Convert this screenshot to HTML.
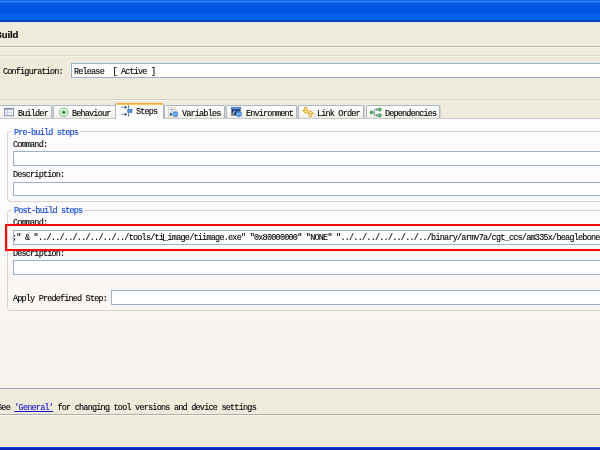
<!DOCTYPE html>
<html>
<head>
<meta charset="utf-8">
<title>Build</title>
<style>
html,body{margin:0;padding:0;}
html{width:600px;height:450px;overflow:hidden;background:#eeebdc;}
body{width:600px;height:450px;overflow:hidden;background:#eeebdc;position:relative;font-family:"Liberation Mono","DejaVu Sans Mono",monospace;}
.abs{position:absolute;}
.t{position:absolute;will-change:transform;font-size:8.5px;line-height:10px;letter-spacing:-0.83px;white-space:pre;color:#000;-webkit-text-stroke:0.12px currentColor;}
.titlebar{left:0;top:0;width:600px;height:22px;background:linear-gradient(to bottom,#0a56d8 0px,#2e88ff 1.5px,#0a5ce8 3px,#0055e2 6px,#0055e0 12px,#0760ee 15px,#0763f2 19px,#0048d0 20.5px,#003cc0 21.5px,#eeebdc 22px);}
.hdr{left:0;top:22px;width:600px;height:368px;background:#eeebdc;}
.build{will-change:transform;left:-5px;top:28.5px;font-family:"Liberation Sans",sans-serif;font-weight:bold;font-size:9.6px;line-height:12px;color:#000;letter-spacing:-0.15px;-webkit-text-stroke:0.15px #000;}
.hl{left:0;width:600px;height:1px;}
.inp{position:absolute;background:#fff;border:1px solid #98b2cf;box-sizing:border-box;}
.page{left:-2px;top:118px;width:604px;height:269.3px;border-top:1px solid #c9cacc;border-bottom:1px solid #a0abb5;background:linear-gradient(to bottom,#fefcfe 0%,#fcf9fb 40%,#f8f5f1 75%,#f6f3ed 100%);}
.tab{position:absolute;top:105px;height:13px;box-sizing:border-box;border:1px solid #a9b8c4;border-bottom:none;border-radius:2px 2px 0 0;background:linear-gradient(to bottom,#ffffff 0%,#fbfbf8 50%,#eeede4 100%);box-shadow:1px 0 0 #d4d2c4;}
.tab.sel{top:103px;height:16px;background:linear-gradient(to bottom,#eda230 0,#f3ac38 1px,#fdc654 1.2px,#fdca5c 2.4px,#fefcfd 2.5px);border-color:#aab7c1;border-top:none;border-radius:3px 3px 0 0;box-shadow:none;}
.grp{position:absolute;border:1px solid #d7d5c7;border-radius:3px;box-sizing:border-box;}
.gt{color:#0a46d8;}
</style>
</head>
<body>
<div style="position:absolute;left:0;top:0;width:600px;height:450px;overflow:hidden;">
<div class="abs hdr"></div>
<div class="abs titlebar"></div>
<div class="abs build">Build</div>
<div class="abs hl" style="top:46px;background:#bcbaae;"></div>
<div class="abs hl" style="top:47px;background:#f4f2ea;"></div>
<div class="abs hl" style="top:54.5px;background:#dcd9cc;"></div>
<div class="abs hl" style="top:55.5px;background:#f3f1e8;"></div>

<div class="t" style="left:3px;top:67px;">Configuration:</div>
<div class="inp" style="left:71px;top:63px;width:540px;height:15px;"></div>
<div class="t" style="left:74px;top:67px;">Release  [ Active ]</div>

<div class="abs hl" style="top:98.5px;background:#d6d3c6;"></div>
<div class="abs hl" style="top:99.5px;background:#f3f1e8;"></div>

<!-- tab page -->
<div class="abs page"></div>

<!-- tabs -->
<div class="tab" style="left:-2px;width:54px;"></div>
<div class="tab" style="left:53px;width:63px;"></div>
<div class="tab" style="left:164px;width:61px;"></div>
<div class="tab" style="left:226px;width:71px;"></div>
<div class="tab" style="left:298px;width:66px;"></div>
<div class="tab" style="left:366px;width:74px;"></div>
<div class="tab sel" style="left:115px;width:49px;"></div>

<div class="t" style="left:18px;top:109px;">Builder</div>
<div class="t" style="left:72px;top:109px;">Behaviour</div>
<div class="t" style="left:135.8px;top:107px;">Steps</div>
<div class="t" style="left:182px;top:109px;">Variables</div>
<div class="t" style="left:246px;top:109px;">Environment</div>
<div class="t" style="left:317px;top:109px;">Link Order</div>
<div class="t" style="left:385px;top:109px;">Dependencies</div>

<!-- icons -->
<svg class="abs" style="left:0;top:100px;" width="450" height="22" viewBox="0 100 450 22">
  <!-- builder -->
  <rect x="4.5" y="108.4" width="9" height="7.2" fill="#f1f3f9" stroke="#8a98bb" stroke-width="1"/>
  <rect x="4" y="107.9" width="10" height="1.9" fill="#8a98bb"/>
  <line x1="7.3" y1="110" x2="7.3" y2="115.3" stroke="#b3bdd6" stroke-width="0.9"/>
  <line x1="5" y1="112.6" x2="13.4" y2="112.6" stroke="#d0d6e6" stroke-width="0.8"/>
  <!-- behaviour -->
  <circle cx="63.7" cy="112.3" r="4.2" fill="#f3faf4" stroke="#66b886" stroke-width="1"/>
  <circle cx="63.7" cy="112.3" r="2.2" fill="#8fd0a0"/>
  <circle cx="63.7" cy="112.3" r="1.4" fill="#2f8f38"/>
  <!-- steps -->
  <line x1="121.3" y1="107.3" x2="125.2" y2="107.3" stroke="#3f86d6" stroke-width="0.9"/>
  <line x1="121.3" y1="114.3" x2="125.2" y2="114.3" stroke="#3f86d6" stroke-width="0.9"/>
  <path d="M124.8 105.6 L127.2 107.3 L124.8 109 Z" fill="#3e4a60"/>
  <path d="M124.8 112.6 L127.2 114.3 L124.8 116 Z" fill="#3e4a60"/>
  <line x1="128.5" y1="105.3" x2="128.5" y2="108.6" stroke="#3a557e" stroke-width="0.8"/>
  <line x1="128.5" y1="113" x2="128.5" y2="116.5" stroke="#3a557e" stroke-width="0.8"/>
  <rect x="127.3" y="109" width="5" height="3.8" fill="#2f76c6"/>
  <rect x="127.3" y="110.3" width="5" height="1.1" fill="#78aee6"/>
  <!-- variables -->
  <path d="M168.4 107.4 H174.3 L177 110.1 V117.2 H168.4 Z" fill="#f9f9fc" stroke="#d8c99c" stroke-width="0.8"/>
  <path d="M174.3 107.4 L177 110.1 H174.3 Z" fill="#e3cd8c"/>
  <rect x="170" y="109.2" width="3.4" height="1" fill="#6b88c8"/>
  <rect x="170" y="111.2" width="4.6" height="0.7" fill="#c5d1ea"/>
  <rect x="169.8" y="112.8" width="2" height="3" fill="#2f4f9a"/>
  <circle cx="175.3" cy="114.1" r="2.9" fill="#4b8cd8"/>
  <rect x="173.4" y="113.1" width="3.8" height="0.7" fill="#9cc3f0"/>
  <rect x="173.4" y="114.5" width="3.8" height="0.7" fill="#8ab8ec"/>
  <!-- environment -->
  <rect x="231.2" y="107.2" width="9.6" height="8.5" fill="#27427e" stroke="#b9a56e" stroke-width="0.6"/>
  <rect x="231" y="107" width="10" height="1.9" fill="#3a7cdb"/>
  <rect x="232" y="108" width="8" height="0.5" fill="#9cc0f2"/>
  <path d="M232.6 114.6 L234.9 110.4" stroke="#f0f4ff" stroke-width="1" fill="none"/>
  <circle cx="239" cy="114" r="3" fill="#4b8cd4"/>
  <rect x="237" y="113" width="4" height="0.7" fill="#a6caf2"/>
  <rect x="237" y="114.4" width="4" height="0.7" fill="#8fbcec"/>
  <!-- link order -->
  <g fill="#f9cf5e" stroke="#dc9c1c" stroke-width="0.8" stroke-linejoin="round">
    <path d="M304.6 107.3 H306.8 V110.4 H308.8 L305.7 113.6 L302.6 110.4 H304.6 Z"/>
    <path d="M310.5 110.6 L313.8 113.5 H311.7 V116.6 H309.3 V113.5 H307.4 Z"/>
  </g>
  <path d="M305.7 108 V112" stroke="#fff3c0" stroke-width="0.8"/>
  <path d="M310.5 112 V116" stroke="#fff3c0" stroke-width="0.8"/>
  <!-- dependencies -->
  <g stroke="#66789a" stroke-width="0.8" fill="none">
    <path d="M372.5 112.3 H374.3 M377.8 109.5 H374.3 V115.3 H377.8"/>
    <path d="M376.5 108 V110.8 M376.5 113.9 V116.7" stroke-width="0.7"/>
  </g>
  <circle cx="371.5" cy="112.3" r="1.9" fill="#43a04a"/>
  <circle cx="379.5" cy="109.5" r="2.1" fill="#43a04a"/>
  <circle cx="379.5" cy="115.3" r="2.1" fill="#43a04a"/>
  <circle cx="371.3" cy="112" r="0.8" fill="#7cc884"/>
  <circle cx="379.3" cy="109.2" r="0.9" fill="#7cc884"/>
  <circle cx="379.3" cy="115" r="0.9" fill="#7cc884"/>
</svg>

<!-- group 1 -->
<div class="grp" style="left:7px;top:131.3px;width:610px;height:70.3px;"></div>
<div class="abs" style="left:11.5px;top:130px;width:68px;height:3px;background:#fcfafc;"></div>
<div class="t gt" style="left:13.5px;top:128px;">Pre-build steps</div>
<div class="t" style="left:13px;top:140px;">Command:</div>
<div class="inp" style="left:13px;top:151.1px;width:600px;height:15px;"></div>
<div class="t" style="left:13px;top:170px;">Description:</div>
<div class="inp" style="left:13px;top:181.6px;width:600px;height:14.4px;"></div>

<!-- group 2 -->
<div class="grp" style="left:7px;top:210px;width:610px;height:100.6px;"></div>
<div class="abs" style="left:11.5px;top:209px;width:72px;height:3px;background:#fbf9fa;"></div>
<div class="t gt" style="left:13.5px;top:206px;">Post-build steps</div>
<div class="t" style="left:13px;top:218px;">Command:</div>
<div class="inp" style="left:13px;top:230px;width:600px;height:14.5px;"></div>
<div class="t" style="left:11.8px;top:233px;letter-spacing:-0.78px;clip-path:inset(0 0 0 2.4px);">;" &amp; "../../../../../../../tools/ti_image/tiimage.exe" "0x80000000" "NONE" "../../../../../../../binary/armv7a/cgt_ccs/am335x/beaglebone.</div>
<div class="abs" style="left:162.8px;top:233.5px;width:0.8px;height:7.5px;background:#222;"></div>
<div class="t" style="left:13px;top:249px;">Description:</div>
<div class="inp" style="left:13px;top:259.9px;width:600px;height:14.8px;"></div>
<div class="t" style="left:13px;top:294px;">Apply Predefined Step:</div>
<div class="inp" style="left:111.2px;top:289.9px;width:500px;height:15px;"></div>

<!-- red highlight -->
<div class="abs" style="left:4.6px;top:224.2px;width:610px;height:26.6px;box-sizing:border-box;border:2.7px solid #fb0505;"></div>

<!-- footer -->
<div class="t" style="left:-3px;top:403px;letter-spacing:-0.785px;">See <span style="color:#1414c8;text-decoration:underline;">'General'</span> for changing tool versions and device settings</div>
<div class="abs hl" style="top:413.9px;background:#b2b0a6;"></div>
<div class="abs hl" style="top:414.9px;background:#f7f5ee;"></div>
<div class="abs" style="left:0;top:445.6px;width:600px;height:4.4px;background:linear-gradient(to bottom,#fbf5e2 0,#fbf5e2 0.9px,#0a36d6 1.2px,#0833cf 2px,#0322ac 3.4px,#001c9e 4.4px);"></div>
</div>
</body>
</html>
